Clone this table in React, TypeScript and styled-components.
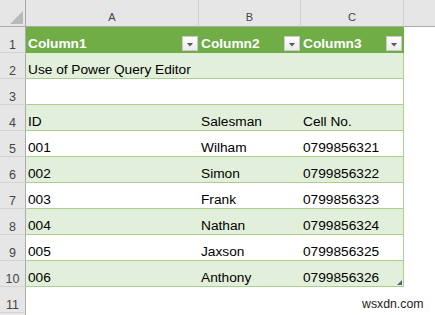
import React from "react";
import styled, { createGlobalStyle } from "styled-components";

const Global = createGlobalStyle`
  html, body { margin: 0; padding: 0; background: #ffffff; }
  body { font-family: "Liberation Sans", Arial, sans-serif; }
`;

const COLS = "26px 173px 102px 103px 1fr";

const Sheet = styled.div`
  position: relative;
  width: 435px;
  height: 315px;
  overflow: hidden;
  background: #ffffff;
  display: flex;
  flex-direction: column;
`;

const HeaderRow = styled.div`
  display: grid;
  grid-template-columns: ${COLS};
  height: 27px;
  flex: none;
  background: #e6e6e6;
`;

const Corner = styled.div`
  border-right: 1px solid #ababab;
  border-bottom: 1px solid #ababab;
  display: flex;
  align-items: flex-end;
  justify-content: flex-end;
  padding: 0 2px 2px 0;
`;

const CornerMark = styled.div`
  width: 13px;
  height: 13px;
  background: #b9b9b9;
  clip-path: polygon(100% 0, 100% 100%, 0 100%);
`;

const ColLetter = styled.div`
  border-right: 1px solid #d0d0d0;
  border-bottom: 1px solid #ababab;
  display: flex;
  align-items: flex-end;
  justify-content: center;
  padding-bottom: 3px;
  font-size: 11px;
  line-height: 1;
  color: #444444;
`;

const ColFill = styled.div`
  border-bottom: 1px solid #ababab;
`;

const Row = styled.div`
  display: grid;
  grid-template-columns: ${COLS};
  height: 26px;
  flex: none;
`;

const RowNum = styled.div`
  background: #e6e6e6;
  border-right: 1px solid #ababab;
  border-bottom: 1px solid #d4d4d4;
  display: flex;
  align-items: flex-end;
  justify-content: center;
  padding-bottom: 1px;
  font-size: 12.5px;
  line-height: 1;
  color: #444444;
`;

type Kind = "head" | "band" | "plain" | "none";

const bg: Record<Kind, string> = {
  head: "#70ad47",
  band: "#e2efda",
  plain: "#ffffff",
  none: "#ffffff",
};

const line: Record<Kind, string> = {
  head: "#70ad47",
  band: "#a9d08e",
  plain: "#a9d08e",
  none: "#ffffff",
};

const Cell = styled.div<{ $kind: Kind; $edge?: boolean }>`
  position: relative;
  background: ${(p) => bg[p.$kind]};
  border-bottom: 1px solid ${(p) => line[p.$kind]};
  border-right: ${(p) => (p.$edge ? `1px solid ${line[p.$kind]}` : "none")};
  display: flex;
  align-items: flex-end;
  justify-content: space-between;
  padding: 0 0 1px 2px;
  min-width: 0;
  font-size: 13.7px;
  line-height: 1;
  color: ${(p) => (p.$kind === "head" ? "#ffffff" : "#000000")};
  font-weight: ${(p) => (p.$kind === "head" ? 700 : 400)};
  white-space: nowrap;
`;

const Filler = styled.div`
  background: #ffffff;
`;

const FilterButton = styled.div`
  width: 16px;
  height: 15px;
  box-sizing: border-box;
  margin: 0 1px 0 0;
  align-self: flex-end;
  background: linear-gradient(#fefefe, #ececec);
  border: 1px solid #c9c9c9;
  display: flex;
  align-items: center;
  justify-content: center;
  padding-top: 2px;
`;

const Arrow = styled.div`
  width: 7px;
  height: 4px;
  background: #595959;
  clip-path: polygon(0 0, 100% 0, 50% 100%);
`;

const ResizeHandle = styled.div`
  position: absolute;
  right: 1px;
  bottom: 1px;
  width: 5px;
  height: 5px;
  background: #4d6285;
  clip-path: polygon(100% 0, 100% 100%, 0 100%);
`;

const Watermark = styled.div`
  position: absolute;
  left: 362px;
  top: 298px;
  font-family: "Liberation Sans", Arial, sans-serif;
  font-size: 12.3px;
  line-height: 1;
  color: #222222;
`;

type RowData = { n: number; label: string; kind: Kind; cells: [string, string, string] };

const rows: RowData[] = [
  { n: 1, label: "1", kind: "head", cells: ["Column1", "Column2", "Column3"] },
  { n: 2, label: "2", kind: "band", cells: ["Use of Power Query Editor", "", ""] },
  { n: 3, label: "3", kind: "plain", cells: ["", "", ""] },
  { n: 4, label: "4", kind: "band", cells: ["ID", "Salesman", "Cell No."] },
  { n: 5, label: "5", kind: "plain", cells: ["001", "Wilham", "0799856321"] },
  { n: 6, label: "6", kind: "band", cells: ["002", "Simon", "0799856322"] },
  { n: 7, label: "7", kind: "plain", cells: ["003", "Frank", "0799856323"] },
  { n: 8, label: "8", kind: "band", cells: ["004", "Nathan", "0799856324"] },
  { n: 9, label: "9", kind: "plain", cells: ["005", "Jaxson", "0799856325"] },
  { n: 10, label: "10", kind: "band", cells: ["006", "Anthony", "0799856326"] },
  { n: 11, label: "11", kind: "none", cells: ["", "", ""] },
  { n: 12, label: "", kind: "none", cells: ["", "", ""] },
];

export default function App() {
  return (
    <>
      <Global />
      <Sheet>
        <HeaderRow>
          <Corner>
            <CornerMark />
          </Corner>
          <ColLetter>A</ColLetter>
          <ColLetter>B</ColLetter>
          <ColLetter>C</ColLetter>
          <ColFill />
        </HeaderRow>
        {rows.map((r) => (
          <Row key={r.n}>
            <RowNum>{r.label}</RowNum>
            {r.cells.map((c, i) => (
              <Cell key={i} $kind={r.kind} $edge={i === 2 && r.kind !== "none"}>
                <span>{c}</span>
                {r.kind === "head" && (
                  <FilterButton>
                    <Arrow />
                  </FilterButton>
                )}
                {r.n === 10 && i === 2 && <ResizeHandle />}
              </Cell>
            ))}
            <Filler />
          </Row>
        ))}
        <Watermark>wsxdn.com</Watermark>
      </Sheet>
    </>
  );
}
